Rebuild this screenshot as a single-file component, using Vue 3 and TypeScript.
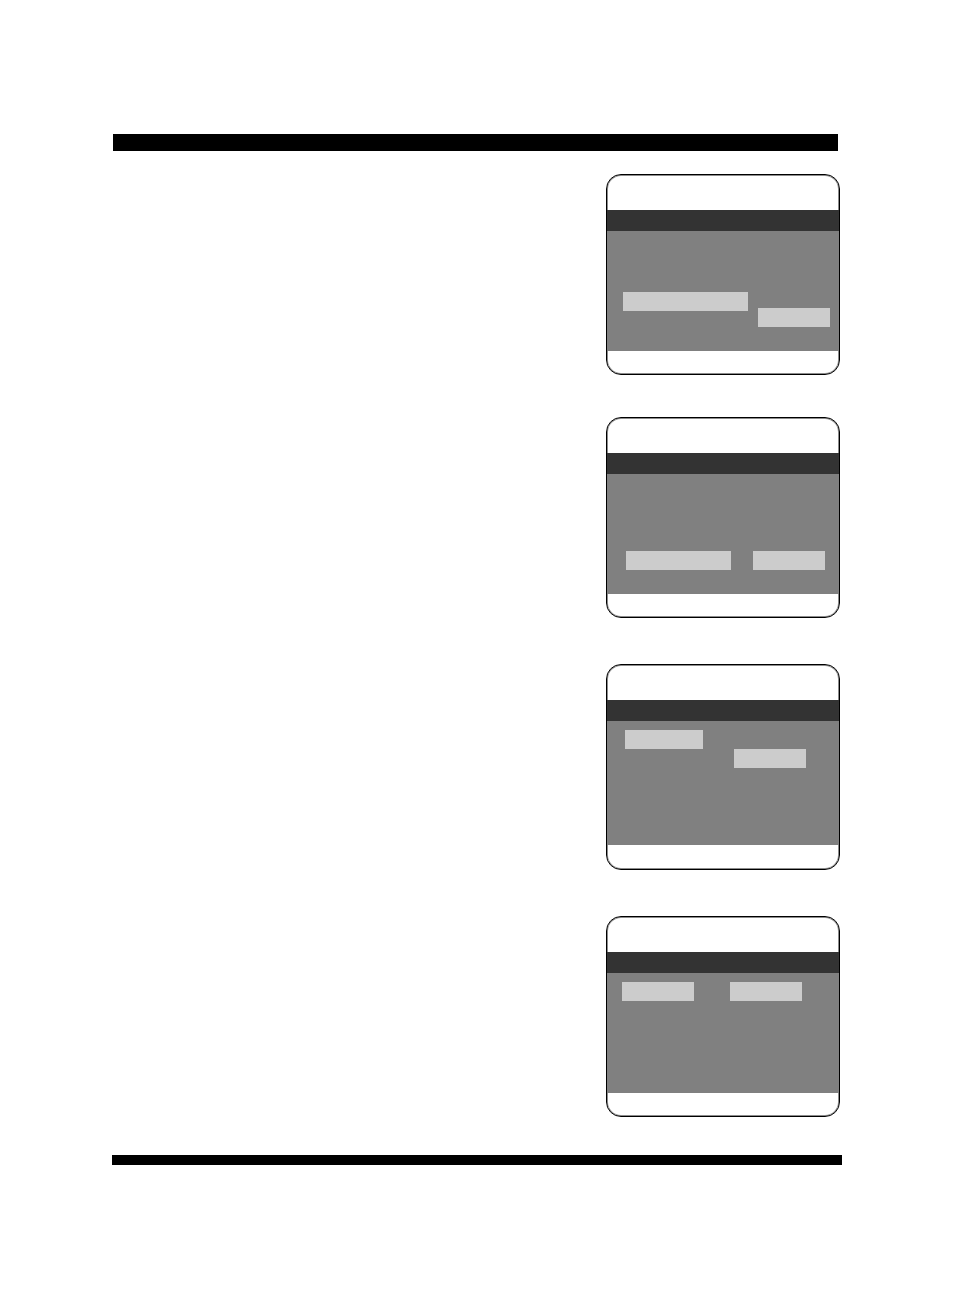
<script setup lang="ts">
interface Screen {
  id: string
  tall: boolean
}

const screens: Screen[] = [
  { id: 'first', tall: false },
  { id: 'second', tall: false },
  { id: 'third', tall: true },
  { id: 'fourth', tall: false },
]
</script>

<template>
  <div class="page">
    <header class="bar bar-top"></header>
    <main class="screens">
      <section v-for="screen in screens" :key="screen.id" class="screen" :class="[screen.id, { tall: screen.tall }]">
        <div class="screen-head"></div>
        <div class="screen-tabs"></div>
        <div class="screen-body">
          <div class="chip menu"></div>
          <div class="chip option"></div>
        </div>
        <div class="screen-foot"></div>
      </section>
    </main>
    <footer class="bar bar-bottom"></footer>
  </div>
</template>

<style>
body {
  background: #fff;
}
</style>

<style scoped>
.page {
  box-sizing: border-box;
  padding: 134px 112px 124px;
  font-family: "Liberation Sans", sans-serif;
}

.bar {
  background: #000;
}

.bar-top {
  height: 17px;
  margin: 0 4px 0 1px;
}

.bar-bottom {
  height: 10px;
}

.screens {
  display: flex;
  flex-direction: column;
  align-items: flex-end;
  gap: 46px;
  padding: 23px 2px 38px;
}

.screen {
  box-sizing: border-box;
  display: flex;
  flex-direction: column;
  width: 234px;
  border: 1px solid #000;
  border-radius: 15px;
  box-shadow: inset 0 0 0 1px rgba(0, 0, 0, 0.45);
}

.first {
  margin-bottom: -4px;
}

.screen-head {
  height: 35px;
}

.screen-tabs {
  height: 21px;
  background: #333;
}

.screen-body {
  display: flex;
  align-items: flex-start;
  box-sizing: border-box;
  height: 120px;
  background: #808080;
}

.tall .screen-body {
  height: 124px;
}

.screen-foot {
  height: 23px;
}

.tall .screen-foot {
  height: 24px;
}

.chip {
  width: 72px;
  height: 19px;
  background: #ccc;
}

.first .screen-body {
  padding: 61px 0 0 16px;
  gap: 10px;
}

.first .menu {
  width: 125px;
}

.first .option {
  margin-top: 16px;
}

.second .screen-body {
  padding: 77px 0 0 19px;
  gap: 22px;
}

.second .menu {
  width: 105px;
}

.third .screen-body {
  padding: 9px 0 0 18px;
  gap: 31px;
}

.third .menu {
  width: 78px;
}

.third .option {
  margin-top: 19px;
}

.fourth .screen-body {
  padding: 9px 0 0 15px;
  gap: 36px;
}
</style>
